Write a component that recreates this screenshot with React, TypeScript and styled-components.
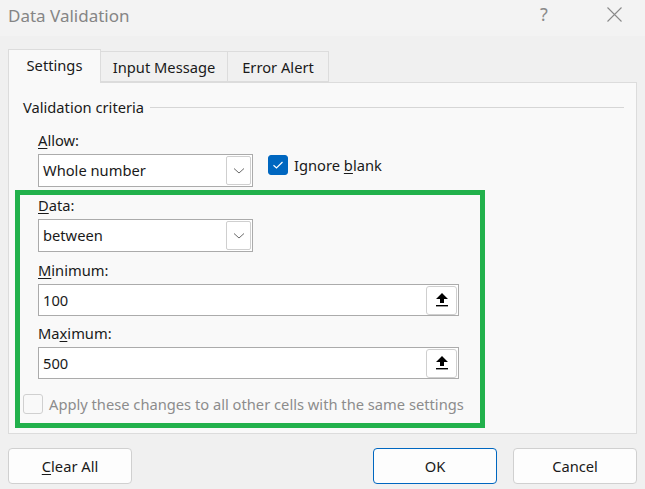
import React from "react";
import styled, { createGlobalStyle } from "styled-components";

const Global = createGlobalStyle`
  html, body { margin: 0; padding: 0; background: #f0f0f0; }
  body { font-family: "Noto Sans", "Open Sans", sans-serif; color: #1a1a1a; }
  * { box-sizing: border-box; }
`;

const Window = styled.div`
  width: 645px;
  height: 489px;
  background: #f0f0f0;
  display: flex;
  flex-direction: column;
  overflow: hidden;
`;

const TitleBar = styled.div`
  height: 36px;
  flex-shrink: 0;
  background: #f3f3f3;
  display: flex;
  align-items: center;
  padding: 0 23px 0 8px;
`;

const Title = styled.div`
  flex: 1;
  font-size: 17px;
  color: #858585;
  margin-top: -6px;
`;

const TitleButton = styled.div<{ $w: number; $gap?: number }>`
  width: ${(p) => p.$w}px;
  margin-left: ${(p) => p.$gap ?? 0}px;
  display: flex;
  justify-content: center;
  color: #8a8a8a;
  font-size: 18px;
  margin-top: -8px;
`;

const Tabs = styled.div`
  display: flex;
  align-items: flex-end;
  margin-top: 12px;
  padding-left: 8px;
  height: 34px;
  flex-shrink: 0;
  position: relative;
  z-index: 1;
`;

const Tab = styled.div<{ $active?: boolean; $w: number }>`
  width: ${(p) => p.$w}px;
  flex-shrink: 0;
  white-space: nowrap;
  height: ${(p) => (p.$active ? 34 : 31)}px;
  margin-bottom: ${(p) => (p.$active ? -1 : 0)}px;
  background: ${(p) => (p.$active ? "#f9f9f9" : "#f0f0f0")};
  border: 1px solid #dcdcdc;
  border-bottom: ${(p) => (p.$active ? "none" : "1px solid #dcdcdc")};
  border-left: ${(p) => (p.$active ? "1px solid #dcdcdc" : "none")};
  display: flex;
  align-items: center;
  justify-content: center;
  font-size: 14.7px;
  color: #1a1a1a;
  padding-bottom: ${(p) => (p.$active ? 3 : 0)}px;
`;

const Panel = styled.div`
  margin: 0 8px;
  height: 352px;
  flex-shrink: 0;
  background: #f9f9f9;
  border: 1px solid #dcdcdc;
  display: flex;
  flex-direction: column;
  padding-top: 13px;
`;

const GroupHeader = styled.div`
  display: flex;
  align-items: center;
  height: 22px;
  padding-left: 14px;
  padding-right: 12px;
  font-size: 14.7px;
  gap: 6px;
`;

const Rule = styled.div`
  flex: 1;
  height: 1px;
  background: #d6d6d6;
  margin-top: 1px;
`;

const Fields = styled.div<{ $inset?: boolean }>`
  display: flex;
  flex-direction: column;
  padding-left: ${(p) => (p.$inset ? 15 : 29)}px;
  margin-top: ${(p) => (p.$inset ? 0 : 12)}px;
`;

const Label = styled.div<{ $top?: number }>`
  font-size: 14.7px;
  line-height: 20px;
  height: 20px;
  margin-top: ${(p) => p.$top ?? 0}px;
  margin-bottom: 4px;
  u { text-decoration-thickness: 1px; text-underline-offset: 2px; }
`;

const Row = styled.div`
  display: flex;
  align-items: center;
`;

const Select = styled.div`
  width: 215px;
  height: 33px;
  background: #fff;
  border: 1px solid #ababab;
  display: flex;
  align-items: center;
  padding: 0 1px 0 4px;
  font-size: 14.7px;
`;

const FieldText = styled.div`
  flex: 1;
  padding-bottom: 1px;
`;

const DropButton = styled.div`
  width: 25px;
  height: 29px;
  border: 1px solid #cfcfcf;
  border-radius: 2px;
  display: flex;
  align-items: center;
  justify-content: center;
  background: #fff;
`;

const CheckLabel = styled.label<{ $disabled?: boolean; $offset?: boolean }>`
  display: flex;
  align-items: center;
  gap: 6px;
  font-size: 14.7px;
  margin-left: ${(p) => (p.$offset ? 15 : 0)}px;
  margin-top: ${(p) => (p.$offset ? -11 : 0)}px;
  color: ${(p) => (p.$disabled ? "#8c8c8c" : "#1a1a1a")};
  u { text-decoration-thickness: 1px; text-underline-offset: 2px; }
`;

const Box = styled.span<{ $checked?: boolean }>`
  width: 20px;
  height: 20px;
  border-radius: 3px;
  background: ${(p) => (p.$checked ? "#0067c0" : "#f9f9f9")};
  border: 1px solid ${(p) => (p.$checked ? "#0067c0" : "#d0d0d0")};
  display: flex;
  align-items: center;
  justify-content: center;
`;

const Highlight = styled.div`
  margin: 3px 0 0 6px;
  width: 470px;
  height: 238px;
  border: 5px solid #22b14c;
  display: flex;
  flex-direction: column;
  padding-left: 3px;
`;

const InputBox = styled.div`
  width: 421px;
  height: 32px;
  background: #fff;
  border: 1px solid #ababab;
  display: flex;
  align-items: center;
  padding: 0 1px 0 4px;
  font-size: 14.7px;
`;

const RefButton = styled.div`
  width: 31px;
  height: 29px;
  border: 1px solid #cfcfcf;
  border-radius: 3px;
  display: flex;
  align-items: center;
  justify-content: center;
  background: #fff;
`;

const ApplyRow = styled.div`
  margin-top: 15px;
`;

const Buttons = styled.div`
  display: flex;
  margin-top: 14px;
  padding: 0 8px 0 8px;
`;

const Button = styled.div<{ $primary?: boolean; $gap?: number }>`
  width: 124px;
  margin-left: ${(p) => p.$gap ?? 0}px;
  height: 36px;
  background: #fdfdfd;
  border: 1px solid ${(p) => (p.$primary ? "#0067c0" : "#d0d0d0")};
  border-radius: 4px;
  display: flex;
  align-items: center;
  justify-content: center;
  font-size: 14.7px;
  color: #1a1a1a;
  u { text-decoration-thickness: 1px; text-underline-offset: 2px; }
`;

const Spacer = styled.div`
  flex: 1;
`;

const Chevron = () => (
  <svg width="12" height="8" viewBox="0 0 12 8">
    <path d="M1 1.5 L6 6 L11 1.5" fill="none" stroke="#6a6a6a" strokeWidth="1" />
  </svg>
);

const Check = () => (
  <svg width="12" height="10" viewBox="0 0 12 10">
    <path d="M1.5 5.2 L4.5 8 L10.5 2" fill="none" stroke="#fff" strokeWidth="1.2" />
  </svg>
);

const Collapse = () => (
  <svg width="14" height="16" viewBox="0 0 14 16">
    <path d="M7 1 L13 7 L9 7 L9 11 L5 11 L5 7 L1 7 Z" fill="#000" />
    <rect x="1" y="13" width="12" height="1.4" fill="#000" />
  </svg>
);

const CloseIcon = () => (
  <svg width="15" height="15" viewBox="0 0 15 15">
    <path d="M0.5 0.5 L14.5 14.5 M14.5 0.5 L0.5 14.5" stroke="#8a8a8a" strokeWidth="1.1" />
  </svg>
);

export default function App() {
  return (
    <Window>
      <Global />
      <TitleBar>
        <Title>Data Validation</Title>
        <TitleButton $w={18}>?</TitleButton>
        <TitleButton $w={15} $gap={54}>
          <CloseIcon />
        </TitleButton>
      </TitleBar>
      <Tabs>
        <Tab $active $w={93}>Settings</Tab>
        <Tab $w={127}>Input Message</Tab>
        <Tab $w={101}>Error Alert</Tab>
      </Tabs>
      <Panel>
        <GroupHeader>
          Validation criteria
          <Rule />
        </GroupHeader>
        <Fields>
          <Label>
            <u>A</u>llow:
          </Label>
          <Row>
            <Select>
              <FieldText>Whole number</FieldText>
              <DropButton>
                <Chevron />
              </DropButton>
            </Select>
            <CheckLabel $offset>
              <Box $checked>
                <Check />
              </Box>
              <span>
                Ignore <u>b</u>lank
              </span>
            </CheckLabel>
          </Row>
        </Fields>
        <Highlight>
          <Fields $inset>
            <Label>
              <u>D</u>ata:
            </Label>
            <Select>
              <FieldText>between</FieldText>
              <DropButton>
                <Chevron />
              </DropButton>
            </Select>
            <Label $top={8}>
              <u>M</u>inimum:
            </Label>
            <InputBox>
              <FieldText>100</FieldText>
              <RefButton>
                <Collapse />
              </RefButton>
            </InputBox>
            <Label $top={7}>
              Ma<u>x</u>imum:
            </Label>
            <InputBox>
              <FieldText>500</FieldText>
              <RefButton>
                <Collapse />
              </RefButton>
            </InputBox>
          </Fields>
          <ApplyRow>
            <CheckLabel $disabled>
              <Box />
              <span>Apply these changes to all other cells with the same settings</span>
            </CheckLabel>
          </ApplyRow>
        </Highlight>
      </Panel>
      <Buttons>
        <Button>
          <span>
            <u>C</u>lear All
          </span>
        </Button>
        <Spacer />
        <Button $primary>OK</Button>
        <Button $gap={16}>Cancel</Button>
      </Buttons>
    </Window>
  );
}
